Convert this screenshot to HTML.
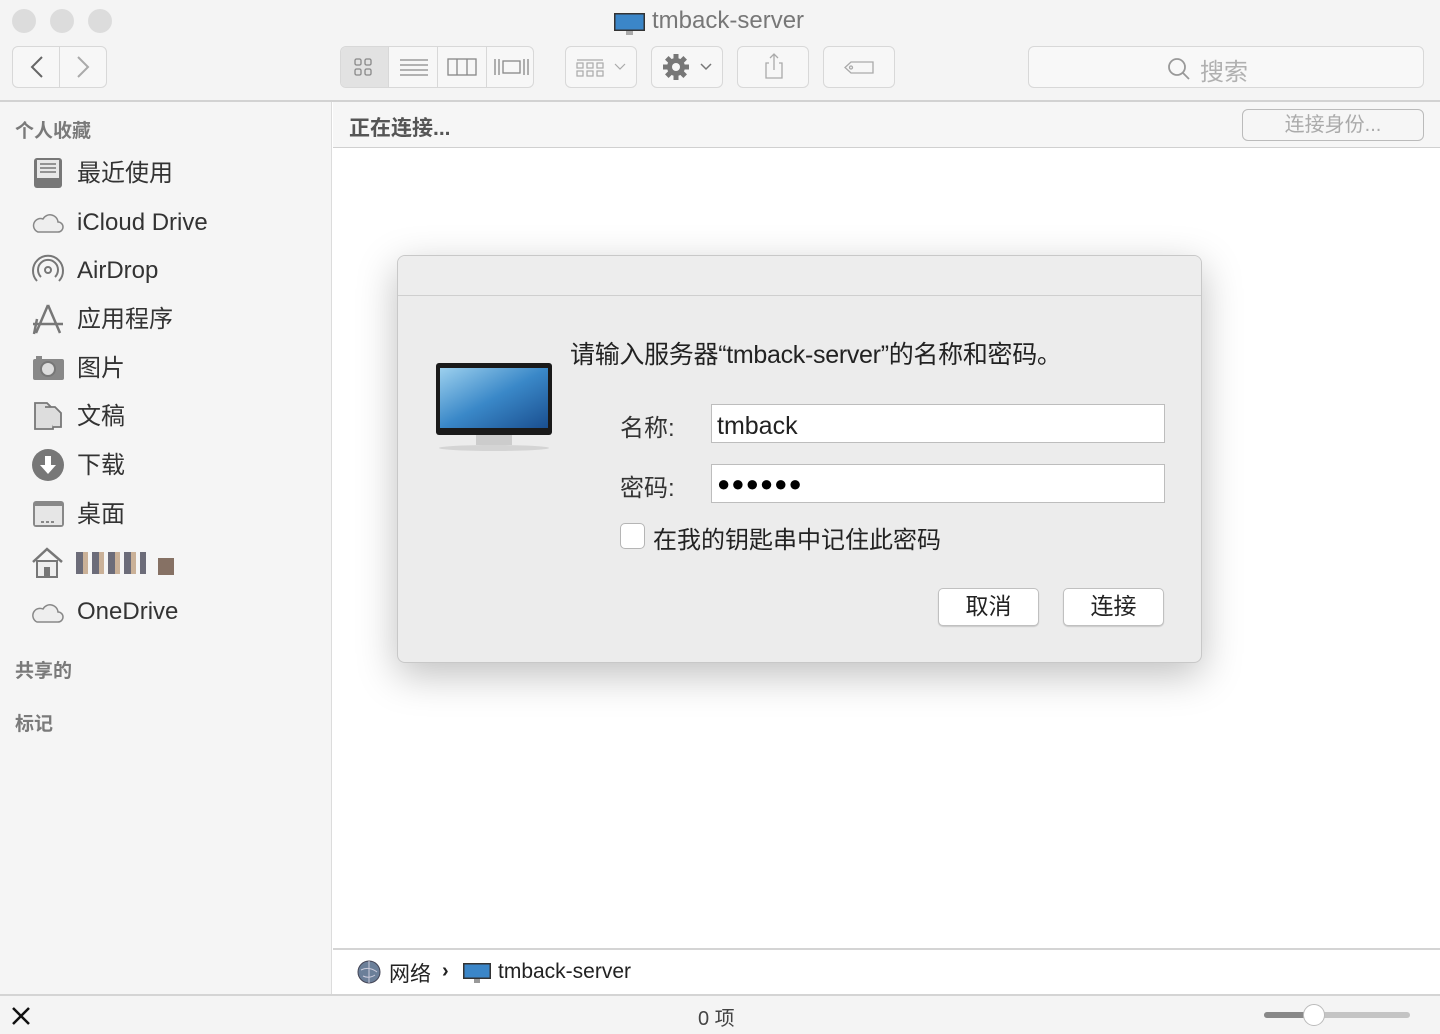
<!DOCTYPE html>
<html><head><meta charset="utf-8"><style>
*{box-sizing:border-box;margin:0;padding:0}
body{width:1440px;height:1034px;overflow:hidden;background:#fff;font-family:"Liberation Sans","Noto Sans CJK SC",sans-serif;position:relative;color:#222}
.abs{position:absolute}
.top{left:0;top:0;width:1440px;height:102px;background:#f4f4f4;border-bottom:2px solid #d2d2d2}
.dot{width:24px;height:24px;border-radius:50%;background:#dcdcdc;top:9px}
.btn{border:1px solid #d8d8d8;border-radius:6px;background:#f7f7f7;height:42px;top:46px}
.side{left:0;top:102px;width:332px;height:892px;background:#f5f5f5;border-right:1px solid #dcdcdc}
.sh{left:15px;font-size:19px;color:#7a7a7a;font-weight:bold}
.it{left:77px;font-size:24px;color:#333;line-height:30px}
.ic{left:31px;width:34px;height:34px}
.hdr{left:333px;top:102px;width:1107px;height:46px;background:#f6f6f6;border-bottom:1px solid #d0d0d0}
.path{left:333px;top:948px;width:1107px;height:46px;background:#fff;border-top:2px solid #d4d4d4}
.status{left:0;top:994px;width:1440px;height:40px;background:#f4f4f4;border-top:2px solid #d4d4d4}
.dlg{left:397px;top:255px;width:805px;height:408px;background:#ececec;border:1px solid #c8c8c8;border-radius:8px;box-shadow:0 12px 40px rgba(0,0,0,.25);overflow:hidden}
.field{background:#fff;border:1px solid #bdbdbd;height:39px;width:454px;left:313px}
.db{background:#fff;border:1px solid #c0c0c0;border-radius:5px;width:101px;height:38px;top:332px;font-size:23px;text-align:center;line-height:34px;box-shadow:0 1px 1px rgba(0,0,0,.15)}
</style></head><body>
<div class="abs top"></div>
<div class="abs dot" style="left:12px"></div>
<div class="abs dot" style="left:50px"></div>
<div class="abs dot" style="left:88px"></div>
<svg class="abs" style="left:614px;top:12px" width="31" height="24"><rect x="0" y="1" width="31" height="18" fill="#333"/><rect x="1.5" y="2.5" width="28" height="15" fill="#3b86c8"/><rect x="12" y="19" width="7" height="4" fill="#aaa"/></svg>
<div class="abs" style="left:652px;top:7px;font-size:24px;color:#777">tmback-server</div>
<div class="abs btn" style="left:12px;width:95px"></div>
<div class="abs" style="left:59px;top:47px;width:1px;height:40px;background:#d8d8d8"></div>
<svg class="abs" style="left:12px;top:46px" width="95" height="42"><path d="M30 11 L20 21 L30 31" stroke="#666" stroke-width="2" fill="none"/><path d="M66 11 L76 21 L66 31" stroke="#aaa" stroke-width="2" fill="none"/></svg>
<div class="abs btn" style="left:340px;width:194px"></div>
<div class="abs" style="left:341px;top:47px;width:47px;height:40px;background:#e2e2e2;border-radius:5px 0 0 5px"></div>
<div class="abs" style="left:388px;top:47px;width:1px;height:40px;background:#d8d8d8"></div>
<div class="abs" style="left:437px;top:47px;width:1px;height:40px;background:#d8d8d8"></div>
<div class="abs" style="left:486px;top:47px;width:1px;height:40px;background:#d8d8d8"></div>
<svg class="abs" style="left:340px;top:46px" width="194" height="42" stroke="#888" fill="none" stroke-width="1.3"><rect x="15" y="13" width="6" height="6" rx="1.5"/><rect x="25" y="13" width="6" height="6" rx="1.5"/><rect x="15" y="23" width="6" height="6" rx="1.5"/><rect x="25" y="23" width="6" height="6" rx="1.5"/><path d="M60 14h28M60 19h28M60 24h28M60 29h28"/><rect x="108" y="13" width="28" height="16"/><path d="M117 13v16M127 13v16"/><path d="M155 13v16M159 13v16M184 13v16M188 13v16"/><rect x="163" y="15" width="17" height="12"/></svg>
<div class="abs btn" style="left:565px;width:72px"></div>
<svg class="abs" style="left:565px;top:46px" width="72" height="42" stroke="#aaa" fill="none" stroke-width="1.2"><path d="M12 14h26"/><rect x="12" y="17" width="6" height="5"/><rect x="22" y="17" width="6" height="5"/><rect x="32" y="17" width="6" height="5"/><rect x="12" y="25" width="6" height="5"/><rect x="22" y="25" width="6" height="5"/><rect x="32" y="25" width="6" height="5"/><path d="M50 18l5 5 5-5"/></svg>
<div class="abs btn" style="left:651px;width:72px"></div>
<svg class="abs" style="left:651px;top:46px" width="72" height="42"><g transform="translate(25,21)" fill="#777"><circle r="9"/><g><rect x="-2.5" y="-13" width="5" height="26"/><rect x="-2.5" y="-13" width="5" height="26" transform="rotate(45)"/><rect x="-2.5" y="-13" width="5" height="26" transform="rotate(90)"/><rect x="-2.5" y="-13" width="5" height="26" transform="rotate(135)"/></g><circle r="4" fill="#f7f7f7"/></g><path d="M50 18l5 5 5-5" stroke="#777" fill="none" stroke-width="1.5"/></svg>
<div class="abs btn" style="left:737px;width:72px"></div>
<svg class="abs" style="left:737px;top:46px" width="72" height="42" stroke="#aaa" fill="none" stroke-width="1.3"><path d="M32 17h-3v15h16v-15h-3M37 8v16M33 12l4-4 4 4"/></svg>
<div class="abs btn" style="left:823px;width:72px"></div>
<svg class="abs" style="left:823px;top:46px" width="72" height="42" stroke="#aaa" fill="none" stroke-width="1.3"><path d="M28 16h22v11h-22l-6-5.5z"/><circle cx="28" cy="21.5" r="1.5"/></svg>
<div class="abs btn" style="left:1028px;width:396px;background:#f8f8f8"></div>
<svg class="abs" style="left:1166px;top:56px" width="26" height="26" stroke="#999" fill="none" stroke-width="1.8"><circle cx="11" cy="11" r="8"/><path d="M17 17l6 6"/></svg>
<div class="abs" style="left:1200px;top:52px;font-size:24px;color:#b0b0b0">搜索</div>

<div class="abs side"></div>
<div class="abs sh" style="top:116px">个人收藏</div>
<div class="abs sh" style="top:656px">共享的</div>
<div class="abs sh" style="top:709px">标记</div>
<svg class="abs ic" style="top:156px" viewBox="0 0 34 34"><rect x="3" y="2" width="28" height="30" rx="3" fill="#777"/><rect x="6" y="4" width="22" height="18" fill="#e8e8e8"/><path d="M9 8h16M9 12h16M9 16h16" stroke="#777" stroke-width="1.5"/></svg>
<div class="abs it" style="top:159px">最近使用</div>
<svg class="abs ic" style="top:205px" viewBox="0 0 34 34"><path d="M7 27h20a5 5 0 0 0 0-10 8 8 0 0 0-15-3 6 6 0 0 0-5 13z" fill="#eee" stroke="#888" stroke-width="1.5"/></svg>
<div class="abs it" style="top:208px">iCloud Drive</div>
<svg class="abs ic" style="top:253px" viewBox="0 0 34 34" fill="none" stroke="#777" stroke-width="2"><circle cx="17" cy="17" r="3"/><path d="M10 24a10 10 0 1 1 14 0M6 28a15 15 0 1 1 22 0"/></svg>
<div class="abs it" style="top:256px">AirDrop</div>
<svg class="abs ic" style="top:302px" viewBox="0 0 34 34" stroke="#777" stroke-width="2.5" fill="none"><path d="M17 3L5 31M17 3l12 28M2 22h30M6 17l-3 15"/></svg>
<div class="abs it" style="top:305px">应用程序</div>
<svg class="abs ic" style="top:350px" viewBox="0 0 34 34"><rect x="2" y="9" width="31" height="21" rx="2" fill="#888"/><rect x="5" y="6" width="6" height="4" fill="#888"/><circle cx="17" cy="19" r="7" fill="#ddd" stroke="#777" stroke-width="2"/></svg>
<div class="abs it" style="top:354px">图片</div>
<svg class="abs ic" style="top:399px" viewBox="0 0 34 34" fill="#ddd" stroke="#777" stroke-width="1.8"><path d="M4 4h12l6 6v20H4z"/><path d="M14 8h10l6 6v14H22"/></svg>
<div class="abs it" style="top:402px">文稿</div>
<svg class="abs ic" style="top:448px" viewBox="0 0 34 34"><circle cx="17" cy="17" r="16" fill="#777"/><path d="M14 8h6v9h5l-8 9-8-9h5z" fill="#fff"/></svg>
<div class="abs it" style="top:451px">下载</div>
<svg class="abs ic" style="top:497px" viewBox="0 0 34 34"><rect x="2" y="4" width="31" height="26" rx="3" fill="#888"/><rect x="4" y="9" width="27" height="19" fill="#e6e6e6"/><path d="M10 25h3M15 25h3M20 25h3" stroke="#888" stroke-width="2"/></svg>
<div class="abs it" style="top:500px">桌面</div>
<svg class="abs ic" style="top:545px" viewBox="0 0 34 34"><path d="M2 17L16 4l15 13" fill="none" stroke="#777" stroke-width="2.5"/><rect x="6" y="16" width="20" height="16" fill="#eee" stroke="#777" stroke-width="2"/><rect x="13" y="22" width="6" height="10" fill="#777"/></svg>
<div class="abs" style="left:76px;top:552px;width:70px;height:22px;background:repeating-linear-gradient(90deg,#4a4a5a 0 7px,#c0a080 7px 12px,#f5f5f5 12px 16px);opacity:.8"></div>
<div class="abs" style="left:158px;top:558px;width:16px;height:17px;background:#6a5040;opacity:.8"></div>
<svg class="abs ic" style="top:594px" viewBox="0 0 34 34"><path d="M6 28h21a5 5 0 0 0 0-10 8 8 0 0 0-15-3 6 6 0 0 0-6 13z" fill="#eee" stroke="#888" stroke-width="1.5"/></svg>
<div class="abs it" style="top:597px">OneDrive</div>

<div class="abs hdr"></div>
<div class="abs" style="left:349px;top:112px;font-size:21px;font-weight:bold;color:#555">正在连接...</div>
<div class="abs" style="left:1242px;top:109px;width:182px;height:32px;border:1.5px solid #bbb;border-radius:6px;background:#f6f6f6;text-align:center;font-size:20px;color:#aaa;line-height:31px">连接身份...</div>

<div class="abs dlg">
<div class="abs" style="left:0;top:0;width:805px;height:40px;background:#ededed;border-bottom:1px solid #cfcfcf"></div>
<svg class="abs" style="left:38px;top:107px" width="118" height="90"><ellipse cx="58" cy="85" rx="55" ry="3" fill="rgba(0,0,0,.1)"/><rect x="40" y="70" width="36" height="12" fill="#ccc"/><rect x="0" y="0" width="116" height="72" rx="3" fill="#1a1a1a"/><defs><linearGradient id="g" x1="0" y1="0" x2="1" y2="1"><stop offset="0" stop-color="#9cd0ee"/><stop offset=".5" stop-color="#3a88c8"/><stop offset="1" stop-color="#1a4f90"/></linearGradient></defs><rect x="4" y="5" width="108" height="60" fill="url(#g)"/></svg>
<div class="abs" style="left:172px;top:79px;font-size:25px;color:#222;letter-spacing:-0.3px">请输入服务器“tmback-server”的名称和密码。</div>
<div class="abs" style="left:222px;top:152px;font-size:24px;color:#333">名称:</div>
<div class="abs field" style="top:148px"></div>
<div class="abs" style="left:319px;top:156px;font-size:25px;color:#222">tmback</div>
<div class="abs" style="left:222px;top:212px;font-size:24px;color:#333">密码:</div>
<div class="abs field" style="top:208px"></div>
<div class="abs" style="left:319px;top:215px;font-size:22px;color:#000;letter-spacing:1px">●●●●●●</div>
<div class="abs" style="left:222px;top:267px;width:25px;height:26px;border:1px solid #b5b5b5;border-radius:5px;background:#fff"></div>
<div class="abs" style="left:255px;top:264px;font-size:24px;color:#222">在我的钥匙串中记住此密码</div>
<div class="abs db" style="left:540px">取消</div>
<div class="abs db" style="left:665px">连接</div>
</div>

<div class="abs path"></div>
<svg class="abs" style="left:357px;top:960px" width="24" height="24"><circle cx="12" cy="12" r="11" fill="#6b7f99"/><circle cx="12" cy="12" r="11" fill="none" stroke="#445" stroke-width="1"/><path d="M4 10q8-4 16 2M6 16q6 3 12-1M12 1v22" stroke="#ccd" fill="none"/></svg>
<div class="abs" style="left:389px;top:958px;font-size:21px;color:#222">网络</div>
<div class="abs" style="left:442px;top:960px;font-size:20px;color:#222;font-weight:bold">›</div>
<svg class="abs" style="left:463px;top:962px" width="28" height="22"><rect x="0" y="1" width="28" height="16" fill="#333"/><rect x="1.5" y="2.5" width="25" height="13" fill="#3b86c8"/><rect x="11" y="17" width="6" height="4" fill="#999"/></svg>
<div class="abs" style="left:498px;top:960px;font-size:21px;color:#222">tmback-server</div>

<div class="abs status"></div>
<svg class="abs" style="left:10px;top:1005px" width="22" height="22" stroke="#111" stroke-width="2.5"><path d="M3 3l16 16M19 3L3 19"/></svg>
<div class="abs" style="left:698px;top:1002px;font-size:20px;color:#444">0 项</div>
<div class="abs" style="left:1264px;top:1012px;width:146px;height:6px;border-radius:3px;background:#c4c4c4"></div>
<div class="abs" style="left:1264px;top:1012px;width:45px;height:6px;border-radius:3px;background:#888"></div>
<div class="abs" style="left:1303px;top:1004px;width:22px;height:22px;border-radius:50%;background:#fff;border:1px solid #bbb"></div>
</body></html>
